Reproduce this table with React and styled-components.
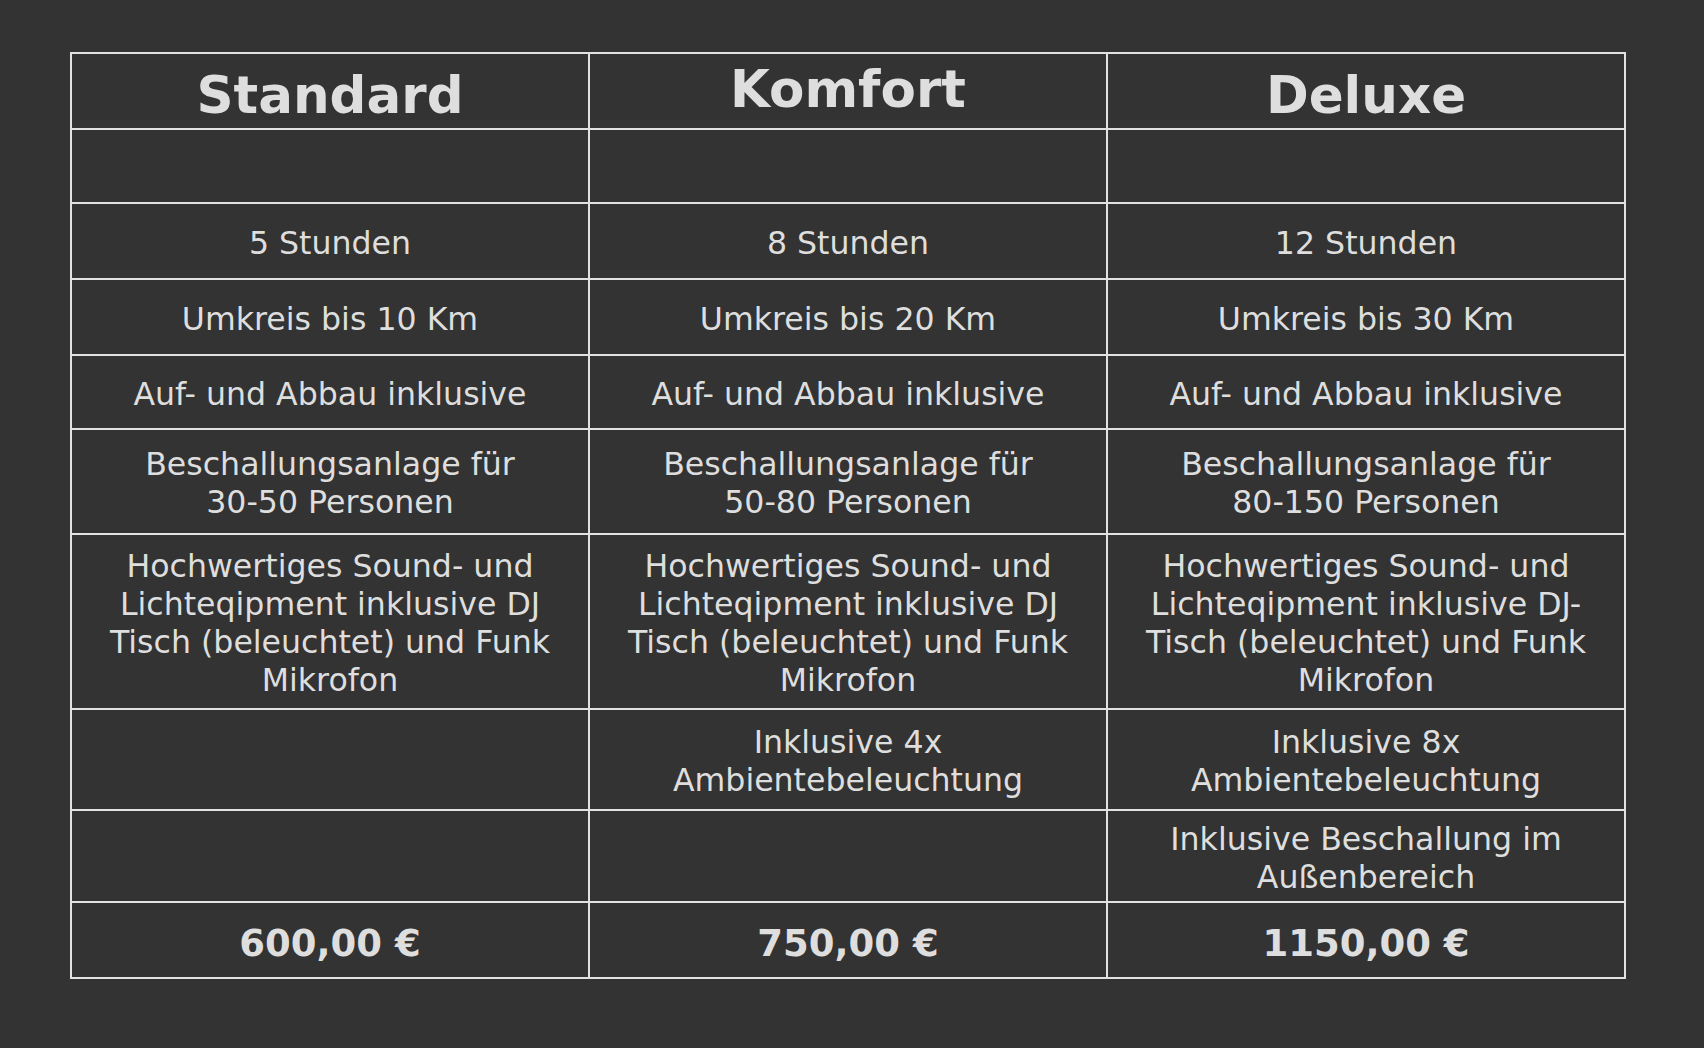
import React from "react";
import styled, { createGlobalStyle } from "styled-components";

const GlobalStyle = createGlobalStyle`
  html, body {
    margin: 0;
    padding: 0;
    background: #333333;
  }
  body {
    font-family: "DejaVu Sans", Verdana, sans-serif;
    color: #e0e0e0;
  }
`;

const Page = styled.div`
  padding: 52px 0 0 70px;
  min-height: 1048px;
  box-sizing: border-box;
`;

const PriceTable = styled.table`
  width: 1556px;
  table-layout: fixed;
  border-collapse: collapse;
  border: 2px solid #e2e2e2;
`;

const Row = styled.tr`
  height: ${(p) => p.$h}px;
`;

const HeadCell = styled.th`
  border: 2px solid #e2e2e2;
  font-size: 51.5px;
  font-weight: bold;
  line-height: 60px;
  color: #dedede;
  text-align: center;
  vertical-align: middle;
  padding: ${(p) => (p.$lift ? "0 16px 4px" : "7px 16px 0")};
`;

const Cell = styled.td`
  border: 2px solid #e2e2e2;
  font-size: 31.6px;
  line-height: 38px;
  color: #dedede;
  text-align: center;
  vertical-align: middle;
  padding: 3px 14px 0;
`;

const PriceCell = styled(Cell)`
  font-size: 37px;
  font-weight: bold;
  padding-top: 7px;
`;

const lines = (arr) =>
  arr.map((t, i) => (
    <React.Fragment key={i}>
      {i > 0 && <br />}
      {t}
    </React.Fragment>
  ));

const rows = [
  { h: 74, cells: [[], [], []] },
  { h: 76, cells: [["5 Stunden"], ["8 Stunden"], ["12 Stunden"]] },
  {
    h: 76,
    cells: [["Umkreis bis 10 Km"], ["Umkreis bis 20 Km"], ["Umkreis bis 30 Km"]],
  },
  {
    h: 74,
    cells: [
      ["Auf- und Abbau inklusive"],
      ["Auf- und Abbau inklusive"],
      ["Auf- und Abbau inklusive"],
    ],
  },
  {
    h: 105,
    cells: [
      ["Beschallungsanlage für", "30-50 Personen"],
      ["Beschallungsanlage für", "50-80 Personen"],
      ["Beschallungsanlage für", "80-150 Personen"],
    ],
  },
  {
    h: 175,
    cells: [
      ["Hochwertiges Sound- und", "Lichteqipment inklusive DJ", "Tisch (beleuchtet) und Funk", "Mikrofon"],
      ["Hochwertiges Sound- und", "Lichteqipment inklusive DJ", "Tisch (beleuchtet) und Funk", "Mikrofon"],
      ["Hochwertiges Sound- und", "Lichteqipment inklusive DJ-", "Tisch (beleuchtet) und Funk", "Mikrofon"],
    ],
  },
  {
    h: 101,
    cells: [
      [],
      ["Inklusive 4x", "Ambientebeleuchtung"],
      ["Inklusive 8x", "Ambientebeleuchtung"],
    ],
  },
  {
    h: 92,
    cells: [[], [], ["Inklusive Beschallung im", "Außenbereich"]],
  },
];

const packages = [
  { name: "Standard", price: "600,00 €" },
  { name: "Komfort", price: "750,00 €", lift: true },
  { name: "Deluxe", price: "1150,00 €" },
];

export default function App() {
  return (
    <>
      <GlobalStyle />
      <Page>
        <PriceTable>
          <thead>
            <Row $h={76}>
              {packages.map((p) => (
                <HeadCell key={p.name} $lift={p.lift}>
                  {p.name}
                </HeadCell>
              ))}
            </Row>
          </thead>
          <tbody>
            {rows.map((r, i) => (
              <Row key={i} $h={r.h}>
                {r.cells.map((c, j) => (
                  <Cell key={j}>{lines(c)}</Cell>
                ))}
              </Row>
            ))}
            <Row $h={76}>
              {packages.map((p) => (
                <PriceCell key={p.name}>{p.price}</PriceCell>
              ))}
            </Row>
          </tbody>
        </PriceTable>
      </Page>
    </>
  );
}
